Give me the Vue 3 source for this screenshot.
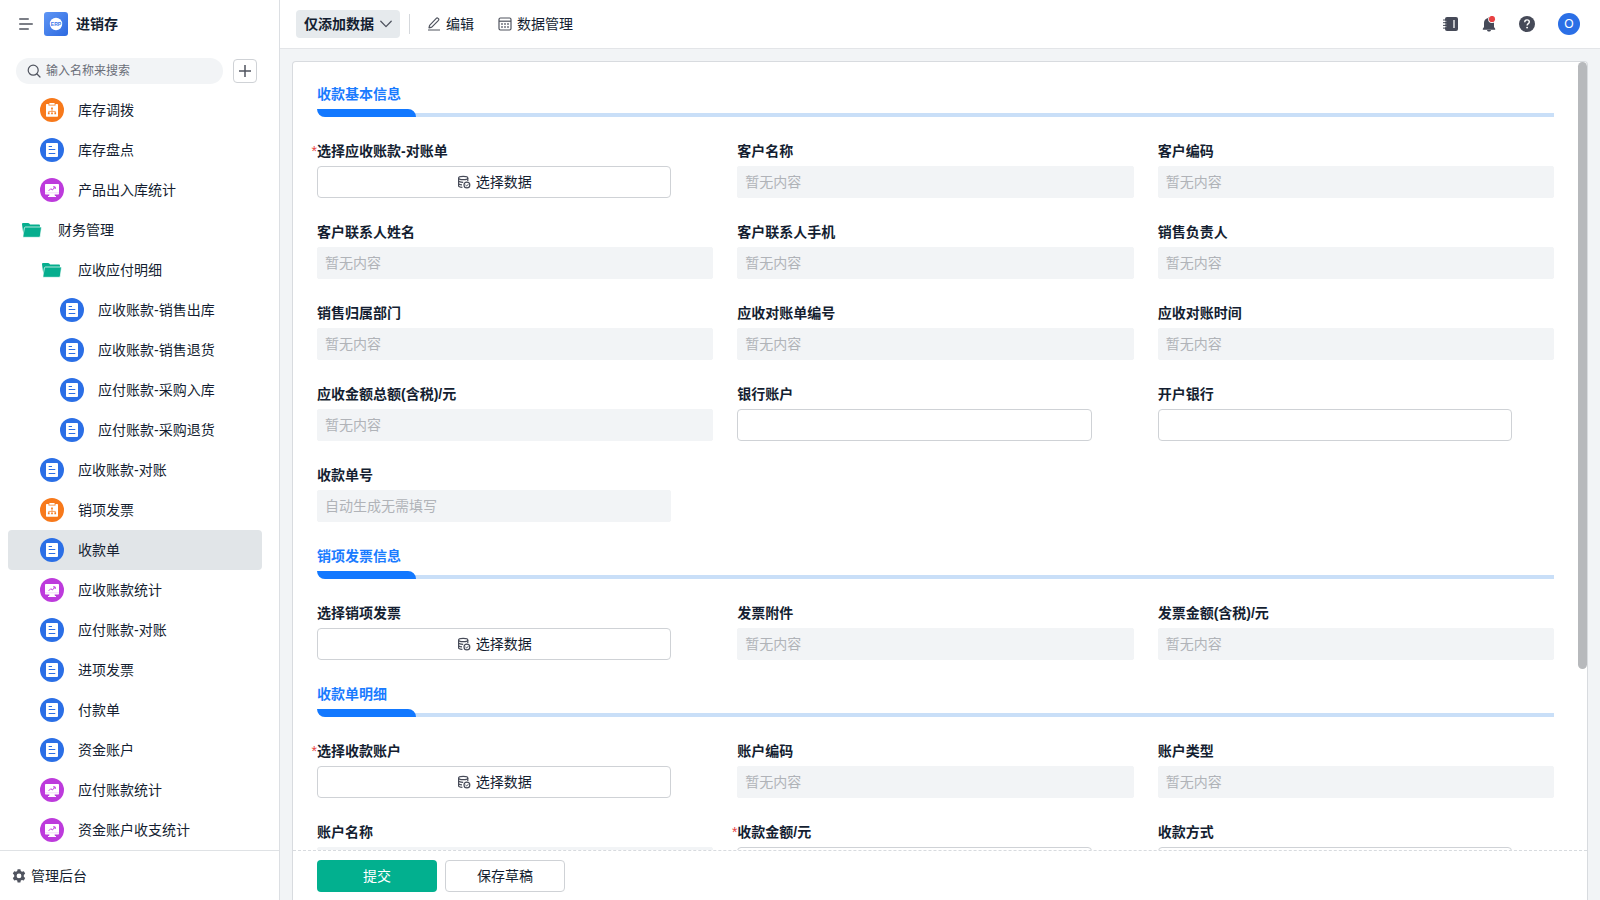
<script setup>
import { ref } from 'vue'

const keyword = ref('')

const navItems = [
  { text: '库存调拨', icon: 'flow', level: 2 },
  { text: '库存盘点', icon: 'form', level: 2 },
  { text: '产品出入库统计', icon: 'chart', level: 2 },
  { text: '财务管理', icon: 'folder', level: 1 },
  { text: '应收应付明细', icon: 'folder', level: 2 },
  { text: '应收账款-销售出库', icon: 'form', level: 3 },
  { text: '应收账款-销售退货', icon: 'form', level: 3 },
  { text: '应付账款-采购入库', icon: 'form', level: 3 },
  { text: '应付账款-采购退货', icon: 'form', level: 3 },
  { text: '应收账款-对账', icon: 'form', level: 2 },
  { text: '销项发票', icon: 'flow', level: 2 },
  { text: '收款单', icon: 'form', level: 2, active: true },
  { text: '应收账款统计', icon: 'chart', level: 2 },
  { text: '应付账款-对账', icon: 'form', level: 2 },
  { text: '进项发票', icon: 'form', level: 2 },
  { text: '付款单', icon: 'form', level: 2 },
  { text: '资金账户', icon: 'form', level: 2 },
  { text: '应付账款统计', icon: 'chart', level: 2 },
  { text: '资金账户收支统计', icon: 'chart', level: 2 },
]

const sections = [
  {
    title: '收款基本信息',
    fields: [
      { label: '选择应收账款-对账单', type: 'pick', required: true },
      { label: '客户名称', type: 'readonly' },
      { label: '客户编码', type: 'readonly' },
      { label: '客户联系人姓名', type: 'readonly' },
      { label: '客户联系人手机', type: 'readonly' },
      { label: '销售负责人', type: 'readonly' },
      { label: '销售归属部门', type: 'readonly' },
      { label: '应收对账单编号', type: 'readonly' },
      { label: '应收对账时间', type: 'readonly' },
      { label: '应收金额总额(含税)/元', type: 'readonly' },
      { label: '银行账户', type: 'text' },
      { label: '开户银行', type: 'text' },
      { label: '收款单号', type: 'auto' },
    ],
  },
  {
    title: '销项发票信息',
    fields: [
      { label: '选择销项发票', type: 'pick' },
      { label: '发票附件', type: 'readonly' },
      { label: '发票金额(含税)/元', type: 'readonly' },
    ],
  },
  {
    title: '收款单明细',
    fields: [
      { label: '选择收款账户', type: 'pick', required: true },
      { label: '账户编码', type: 'readonly' },
      { label: '账户类型', type: 'readonly' },
      { label: '账户名称', type: 'readonly' },
      { label: '收款金额/元', type: 'text', required: true },
      { label: '收款方式', type: 'select' },
    ],
  },
]
</script>

<template>
  <div class="app">
    <aside class="sidebar">
      <header class="brand">
        <button class="plain" type="button" aria-label="收起菜单">
          <svg width="14" height="14" viewBox="0 0 14 14" fill="none" stroke="#50545f" stroke-width="1.6" stroke-linecap="round">
            <path d="M.8 2h8.4M.8 7h12.4M.8 12h8.4" />
          </svg>
        </button>
        <svg width="24" height="24" viewBox="0 0 24 24">
          <defs>
            <linearGradient id="logo-fill" x1="0" y1="0" x2="1" y2="1">
              <stop offset="0" stop-color="#5f96f5" />
              <stop offset="1" stop-color="#2c69e0" />
            </linearGradient>
          </defs>
          <rect width="24" height="24" rx="3" fill="url(#logo-fill)" />
          <circle cx="12" cy="12" r="6.2" fill="#fff" />
          <text x="12" y="13.8" text-anchor="middle" class="logo-text">ERP</text>
        </svg>
        <h1>进销存</h1>
      </header>

      <div class="search-row">
        <label class="search">
          <svg width="14" height="14" viewBox="0 0 14 14" fill="none" stroke="#50545f" stroke-width="1.2" stroke-linecap="round">
            <circle cx="6.2" cy="6.2" r="5" />
            <path d="M10 10l3 3" />
          </svg>
          <input v-model="keyword" type="text" placeholder="输入名称来搜索" aria-label="输入名称来搜索" />
        </label>
        <button class="add" type="button" aria-label="新建">
          <svg width="14" height="14" viewBox="0 0 14 14" stroke="#50545f" stroke-width="1.5">
            <path d="M1 7h12M7 1v12" />
          </svg>
        </button>
      </div>

      <nav class="nav">
        <a
          v-for="item in navItems"
          :key="item.text"
          href="#"
          :class="['nav-item', 'level-' + item.level, { active: item.active }]"
        >
          <svg v-if="item.icon === 'folder'" width="24" height="24" viewBox="0 0 24 24" fill="#05ae8e">
            <path d="M2 6.200c0-.8.5-1.300 1.200-1.300h4.900c.5 0 .9.200 1.200.6l.8 1h8.700c.7 0 1.200.5 1.200 1.200V12L3.500 17.500z" />
            <path d="M5.500 9h15c.6 0 1 .4.900 1l-1.100 8.200c-.1.700-.6 1.100-1.300 1.100H4.100c-.8 0-1.300-.6-1.100-1.400l1.400-8c.1-.6.5-.9 1.100-.9z" stroke="#fff" stroke-width=".7" />
          </svg>
          <svg v-else-if="item.icon === 'form'" width="24" height="24" viewBox="0 0 24 24">
            <circle cx="12" cy="12" r="12" fill="#2b6fe6" />
            <rect x="6" y="5" width="12" height="14" rx="1" fill="#fff" />
            <path d="M8.700 8.500h3.300M8.700 11.500h6.600M8.700 15.500h6.600" stroke="#2b6fe6" stroke-width="1" />
          </svg>
          <svg v-else-if="item.icon === 'flow'" width="24" height="24" viewBox="0 0 24 24">
            <circle cx="12" cy="12" r="12" fill="#f7791b" />
            <path d="M7 6h1.500v1.500h7V6H17c.6 0 1 .4 1 1v10.800c0 .6-.4 1-1 1H7c-.6 0-1-.4-1-1V7c0-.6.4-1 1-1z" fill="#fff" />
            <rect x="9.300" y="5" width="5.400" height="1.700" rx=".5" fill="#fff" />
            <path d="M12 10v3.500M8.700 15v-1.600h6.600V15" fill="none" stroke="#f7791b" stroke-width=".7" />
            <path d="M11.200 9.500h1.600v1.700h-1.600zM7.900 14.600h1.700v1.700H7.900zM11.150 14.600h1.700v1.700h-1.700zM14.400 14.600h1.700v1.700h-1.700z" fill="#f7791b" />
          </svg>
          <svg v-else width="24" height="24" viewBox="0 0 24 24">
            <circle cx="12" cy="12" r="12" fill="#bd3bdc" />
            <path d="M6 6h12c.6 0 1 .4 1 1v8.500c0 .6-.4 1-1 1h-3.500l.5 1.500H16v1H8v-1h1l.5-1.500H6c-.6 0-1-.4-1-1V7c0-.6.4-1 1-1z" fill="#fff" />
            <path d="M5 14.800h14" stroke="#bd3bdc" stroke-width=".6" opacity=".3" />
            <path d="M8.700 12.800l2.100-2.100 1.600 1.300 2.400-2.700M13 8.900h2.200v2.100" fill="none" stroke="#bd3bdc" stroke-width="1" />
          </svg>
          <span>{{ item.text }}</span>
        </a>
      </nav>

      <a class="admin" href="#">
        <svg width="14" height="14" viewBox="0 0 14 14">
          <path
            fill="#50545f"
            fill-rule="evenodd"
            d="M5.600.3h2.800l.4 1.800 1.200.7 1.800-.6 1.400 2.400-1.400 1.300v1.900l1.400 1.300-1.400 2.400-1.800-.6-1.200.7-.4 1.900H5.600l-.4-1.900-1.200-.7-1.800.6L.8 9.100l1.400-1.300V5.900L.8 4.600l1.400-2.400 1.800.6 1.200-.7zM7 4.500a2.400 2.400 0 1 0 0 4.800 2.400 2.400 0 0 0 0-4.800z"
          />
        </svg>
        <span>管理后台</span>
      </a>
    </aside>

    <div class="workspace">
      <header class="topbar">
        <button class="mode" type="button">
          <span>仅添加数据</span>
          <svg width="12" height="8" viewBox="0 0 12 8" fill="none" stroke="#50545f" stroke-width="1.300" stroke-linecap="round" stroke-linejoin="round">
            <path d="M.8 1.200L6 6.600l5.200-5.400" />
          </svg>
        </button>
        <span class="divider"></span>
        <button class="tool" type="button">
          <svg width="14" height="14" viewBox="0 0 14 14" fill="none" stroke="#50545f" stroke-width="1.200" stroke-linejoin="round">
            <path d="M2.600 8.300L9.300 1.300c.5-.5 1.200-.5 1.700 0l.4.400c.5.500.5 1.100.1 1.600L4.800 10.200l-2.800.7zM1 13h12" />
          </svg>
          <span>编辑</span>
        </button>
        <button class="tool" type="button">
          <svg width="14" height="14" viewBox="0 0 14 14" fill="none" stroke="#50545f" stroke-width="1.200">
            <rect x="1" y="1" width="12" height="12" rx="1.400" />
            <path d="M1 4.200h12" />
            <path d="M3.200 6.900h1.600M6.200 6.900h1.600M9.200 6.900h1.600M3.200 9.900h1.600M6.200 9.900h1.600M9.200 9.900h1.600" stroke-width="1.500" />
          </svg>
          <span>数据管理</span>
        </button>

        <div class="actions">
          <button class="plain" type="button" aria-label="通讯录">
            <svg width="16" height="16" viewBox="0 0 16 16">
              <rect x="2" y="1" width="13" height="14" rx="2" fill="#464a58" />
              <path d="M0 4h3M0 6.700h3M0 9.400h3M0 12.100h3" stroke="#464a58" stroke-width="1" />
              <path d="M2 5.300h1.400M2 8h1.400M2 10.700h1.400" stroke="#fff" stroke-width=".7" />
              <path d="M11 4v8" stroke="#fff" stroke-width="1.300" />
            </svg>
          </button>
          <button class="plain" type="button" aria-label="消息">
            <svg width="16" height="16" viewBox="0 0 16 16">
              <path d="M8 1c.7 0 1 .4 1 1 2.600.6 4 2.400 4 5v4l1.200 1.800v.9H1.800v-.9L3 11V7c0-2.600 1.400-4.400 4-5 0-.6.3-1 1-1zM6 14h4c-.2 1-.9 1.600-2 1.600S6.200 15 6 14z" fill="#464a58" />
              <circle cx="11" cy="3" r="3.900" fill="#fff" />
              <circle cx="11" cy="3" r="3.100" fill="#e84143" />
            </svg>
          </button>
          <button class="plain" type="button" aria-label="帮助">
            <svg width="16" height="16" viewBox="0 0 16 16">
              <circle cx="8" cy="8" r="8" fill="#464a58" />
              <path d="M5.700 6.200c0-1.500 1-2.300 2.300-2.300s2.300.8 2.300 2c0 1.700-2.200 1.700-2.200 3.500" fill="none" stroke="#fff" stroke-width="1.400" />
              <circle cx="8.100" cy="11.600" r=".95" fill="#fff" />
            </svg>
          </button>
          <button class="avatar" type="button">O</button>
        </div>
      </header>

      <main class="page">
        <form class="card" @submit.prevent>
          <div class="scroll">
            <section v-for="(section, s) in sections" :key="section.title" class="section">
              <div class="heading">
                <h2>{{ section.title }}</h2>
                <div class="rule"><span class="rule-tab"></span></div>
              </div>
              <div class="fields">
                <div v-for="(field, f) in section.fields" :key="field.label" class="field">
                  <label :for="`field-${s}-${f}`" :class="{ required: field.required }">{{ field.label }}</label>
                  <button v-if="field.type === 'pick'" :id="`field-${s}-${f}`" class="control short pick" type="button">
                    <svg width="14" height="14" viewBox="0 0 14 14" fill="none" stroke="#464a58" stroke-width="1.200">
                      <ellipse cx="6.200" cy="3" rx="4.600" ry="1.700" />
                      <path d="M1.600 3v7.800c0 .8 1.600 1.500 3.800 1.600M10.800 3v2.900M1.600 5.600c0 1 2 1.700 4.600 1.700M1.600 8.300c0 .9 1.400 1.500 3.400 1.600" />
                      <circle cx="9.900" cy="10" r="2.900" />
                      <path d="M8.500 10l1.100 1 1.700-1.800" stroke-width="1" />
                    </svg>
                    <span>选择数据</span>
                  </button>
                  <select v-else-if="field.type === 'select'" :id="`field-${s}-${f}`" class="control short"></select>
                  <input v-else-if="field.type === 'text'" :id="`field-${s}-${f}`" class="control short" type="text" />
                  <input
                    v-else
                    :id="`field-${s}-${f}`"
                    :class="['control', 'muted', { short: field.type === 'auto' }]"
                    type="text"
                    readonly
                    :placeholder="field.type === 'auto' ? '自动生成无需填写' : '暂无内容'"
                  />
                </div>
              </div>
            </section>
          </div>
          <span class="scroll-thumb"></span>
          <footer class="form-footer">
            <button class="submit" type="submit">提交</button>
            <button class="draft" type="button">保存草稿</button>
          </footer>
        </form>
      </main>
    </div>
  </div>
</template>

<style>
body {
  margin: 0;
}
</style>

<style scoped>
.app {
  display: flex;
  height: 100vh;
  overflow: hidden;
  background: #f2f4f6;
  color: #141e31;
  font: 14px/22px "Liberation Sans", "Noto Sans CJK SC", sans-serif;
}
.app *,
.app *::before {
  box-sizing: border-box;
}
button,
input,
select {
  margin: 0;
  padding: 0;
  border: 0;
  background: none;
  color: inherit;
  font: inherit;
}
button {
  cursor: pointer;
}
a {
  color: inherit;
  text-decoration: none;
}
svg {
  display: block;
  flex: none;
}
h1,
h2 {
  margin: 0;
  font-size: 14px;
  font-weight: 600;
}

.sidebar {
  display: flex;
  flex: none;
  flex-direction: column;
  width: 280px;
  border-right: 1px solid #dcdfe3;
  background: #fff;
}
.brand {
  display: flex;
  align-items: center;
  gap: 8px;
  height: 48px;
  padding-left: 19px;
}
.brand .plain {
  margin-right: 3px;
}
.logo-text {
  fill: #3d78ea;
  font: bold 5px "Liberation Sans", sans-serif;
}
.search-row {
  display: flex;
  align-items: center;
  gap: 10px;
  padding: 10px 22px 6px 16px;
}
.search {
  display: flex;
  flex: 1;
  align-items: center;
  gap: 5px;
  height: 26px;
  padding: 0 11px;
  border-radius: 13px;
  background: #f2f4f6;
}
.search input {
  flex: 1;
  min-width: 0;
  outline: 0;
  font-size: 12px;
}
.search input::placeholder {
  color: #6a6e78;
  opacity: 1;
}
.add {
  display: flex;
  align-items: center;
  justify-content: center;
  width: 24px;
  height: 24px;
  border: 1px solid #cfd2d6;
  border-radius: 4px;
}
.nav {
  flex: 1;
  min-height: 0;
  padding: 0 17px 0 8px;
  overflow: hidden;
}
.nav-item {
  display: flex;
  align-items: center;
  gap: 14px;
  height: 40px;
  border-radius: 4px;
}
.level-1 {
  padding-left: 12px;
}
.level-2 {
  padding-left: 32px;
}
.level-3 {
  padding-left: 52px;
}
.nav-item.active {
  background: #e1e5e8;
}
.admin {
  display: flex;
  align-items: center;
  gap: 5px;
  height: 50px;
  padding-left: 12px;
  border-top: 1px solid #dfe2e5;
}

.workspace {
  display: flex;
  flex: 1;
  flex-direction: column;
  min-width: 0;
}
.topbar {
  display: flex;
  flex: none;
  align-items: center;
  height: 49px;
  padding: 0 20px 0 16px;
  border-bottom: 1px solid #e3e5e8;
  background: #fff;
}
.mode {
  display: flex;
  align-items: center;
  gap: 6px;
  height: 28px;
  padding: 0 8px;
  border-radius: 4px;
  background: #e6eaed;
  font-weight: 600;
}
.divider {
  width: 1px;
  height: 20px;
  margin: 0 17px 0 9px;
  background: #d5d8dc;
}
.tool {
  display: flex;
  align-items: center;
  gap: 5px;
  margin-right: 24px;
}
.actions {
  display: flex;
  align-items: center;
  gap: 22px;
  margin-left: auto;
}
.avatar {
  width: 22px;
  height: 22px;
  margin-left: 1px;
  border-radius: 11px;
  background: #2b6fe6;
  color: #fff;
  font-size: 12px;
}

.page {
  flex: 1;
  min-height: 0;
  padding: 12px 12px 0;
}
.card {
  position: relative;
  display: flex;
  flex-direction: column;
  height: 100%;
  border: 1px solid #d8dbdf;
  border-bottom: 0;
  border-radius: 4px 4px 0 0;
  background: #fff;
}
.scroll {
  display: flex;
  flex: 1;
  flex-direction: column;
  gap: 23px;
  min-height: 0;
  padding: 21px 33px 0 24px;
  overflow: hidden;
}
.scroll-thumb {
  position: absolute;
  top: 0;
  right: 0;
  width: 9px;
  height: 72.4%;
  border-radius: 5px;
  background: #b7b9bc;
}
.section {
  display: flex;
  flex: none;
  flex-direction: column;
  gap: 23px;
}
.heading {
  display: flex;
  flex-direction: column;
  gap: 4px;
}
.heading h2 {
  color: #1a7bff;
}
.rule {
  height: 8px;
  background: linear-gradient(#c9dff8, #c9dff8) bottom / 100% 4px no-repeat;
}
.rule-tab {
  display: block;
  width: 99px;
  height: 8px;
  border-radius: 0 8px 0 8px;
  background: #1278ff;
}
.rule {
  border-bottom-left-radius: 8px;
}
.fields {
  display: grid;
  grid-template-columns: repeat(3, minmax(0, 1fr));
  gap: 23px 24px;
}
.field {
  display: flex;
  flex-direction: column;
  gap: 4px;
}
.field label {
  position: relative;
  font-weight: 600;
}
.required::before {
  position: absolute;
  right: 100%;
  color: #e84143;
  content: "*";
  font-weight: 400;
}
.control {
  width: 100%;
  height: 32px;
  padding: 0 8px;
  border: 1px solid #cfd2d6;
  border-radius: 4px;
  outline: 0;
  background: #fff;
  appearance: none;
}
.short {
  width: calc(100% - 42px);
}
.muted {
  border-color: #f2f4f6;
  border-radius: 2px;
  background: #f2f4f6;
  padding: 0 7px;
}
.muted::placeholder {
  color: #b0b3b8;
  opacity: 1;
}
.pick {
  display: flex;
  align-items: center;
  justify-content: center;
  gap: 5px;
}
.form-footer {
  display: flex;
  flex: none;
  gap: 8px;
  height: 50px;
  padding: 9px 24px;
  border-top: 1px dashed #d8dbdf;
}
.form-footer button {
  width: 120px;
  height: 32px;
  border-radius: 4px;
}
.submit {
  background: #02b08f;
  color: #fff;
}
.form-footer .draft {
  border: 1px solid #cfd2d6;
}
</style>
